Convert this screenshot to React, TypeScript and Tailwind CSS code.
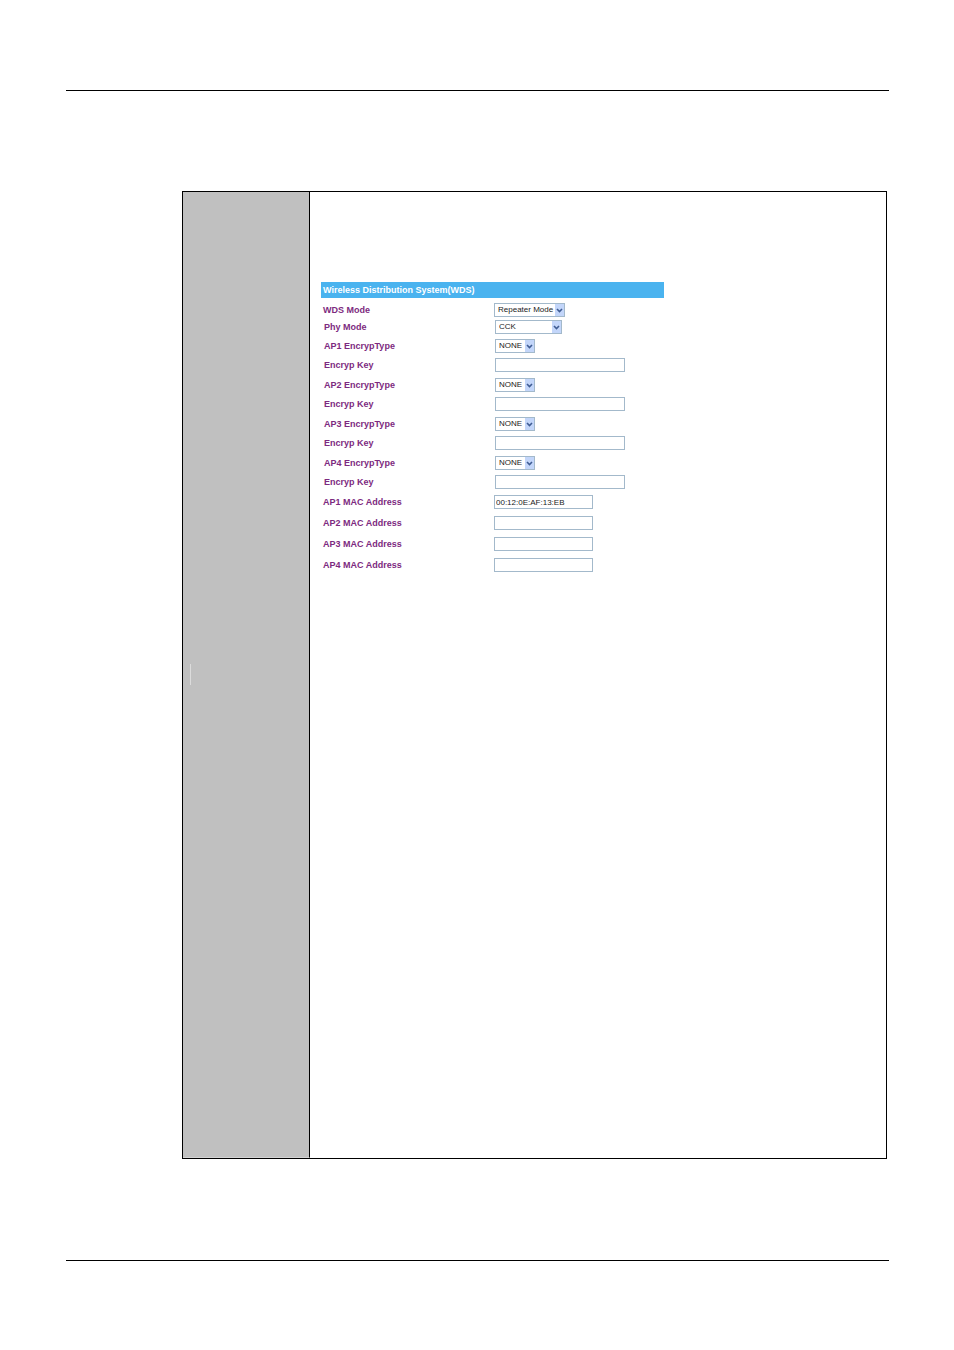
import type { ReactNode } from 'react';

const accessPoints = [1, 2, 3, 4];

const macAddresses = ['00:12:0E:AF:13:EB', '', '', ''];

function Label({ id, children }: { id: string; children: ReactNode }) {
  return (
    <label
      htmlFor={id}
      className="w-[173px] shrink-0 whitespace-nowrap pl-0.5 text-[9px] font-bold leading-none text-[#7d2a80]"
    >
      {children}
    </label>
  );
}

function Dropdown({ id, options, width }: { id: string; options: string[]; width: string }) {
  return (
    <div className={`relative h-3.5 ${width}`}>
      <select
        id={id}
        className="block h-full w-full appearance-none border border-[#a3b9cb] bg-white pl-[3px] text-[8px] leading-none text-[#222]"
      >
        {options.map((option) => (
          <option key={option}>{option}</option>
        ))}
      </select>
      <span
        aria-hidden
        className="pointer-events-none absolute inset-y-px right-px flex w-[9px] items-center justify-center bg-[#c3d6fa]"
      >
        <svg viewBox="0 0 7 5" className="h-[5px] w-[7px]" fill="none" stroke="#405d94" strokeWidth="1.6">
          <path d="M1 1 L3.5 3.5 L6 1" />
        </svg>
      </span>
    </div>
  );
}

function TextBox({ id, value = '', width }: { id: string; value?: string; width: string }) {
  return (
    <input
      id={id}
      type="text"
      defaultValue={value}
      className={`block h-3.5 border border-[#a3b9cb] bg-white pl-px text-[8px] leading-none text-[#222] ${width}`}
    />
  );
}

function WdsForm() {
  return (
    <form className="w-[343px] max-w-full">
      <h2 className="mb-[3px] h-4 bg-[#4ab3ef] pl-0.5 text-[9px] font-bold leading-4 text-white">
        Wireless Distribution System(WDS)
      </h2>

      <div className="flex h-[18px] items-center">
        <Label id="wds-mode">WDS Mode</Label>
        <Dropdown id="wds-mode" options={['Repeater Mode']} width="w-[71px]" />
      </div>
      <div className="flex h-4 items-center pl-px">
        <Label id="phy-mode">Phy Mode</Label>
        <Dropdown id="phy-mode" options={['CCK']} width="w-[67px]" />
      </div>

      {accessPoints.map((ap) => (
        <div key={ap} className="mt-px pl-px">
          <div className="flex h-5 items-center">
            <Label id={`encryp-type-${ap}`}>AP{ap} EncrypType</Label>
            <Dropdown id={`encryp-type-${ap}`} options={['NONE']} width="w-10" />
          </div>
          <div className="flex h-[18px] items-center">
            <Label id={`encryp-key-${ap}`}>Encryp Key</Label>
            <TextBox id={`encryp-key-${ap}`} width="w-[130px]" />
          </div>
        </div>
      ))}

      {macAddresses.map((mac, i) => (
        <div key={i} className="mt-px flex h-5 items-center">
          <Label id={`mac-${i + 1}`}>AP{i + 1} MAC Address</Label>
          <TextBox id={`mac-${i + 1}`} value={mac} width="w-[99px]" />
        </div>
      ))}
    </form>
  );
}

export default function App() {
  return (
    <div className="bg-white pb-[89px] pl-[66px] pr-[65px] pt-[90px] font-['Liberation_Sans',Arial,sans-serif]">
      <hr className="border-black" />

      <main className="mb-[101px] ml-[116px] mr-0.5 mt-[100px] flex min-h-[968px] border border-black">
        <aside className="w-[127px] shrink-0 border-b border-r border-b-[#d4d4d4] border-r-black bg-[#c0c0c0] pl-[7px] pt-[472px]">
          <div className="h-[21px] w-px bg-[#dcdcdc]" />
        </aside>
        <section className="min-w-0 flex-1 pl-[11px] pt-[90px]">
          <WdsForm />
        </section>
      </main>

      <hr className="border-black" />
    </div>
  );
}
